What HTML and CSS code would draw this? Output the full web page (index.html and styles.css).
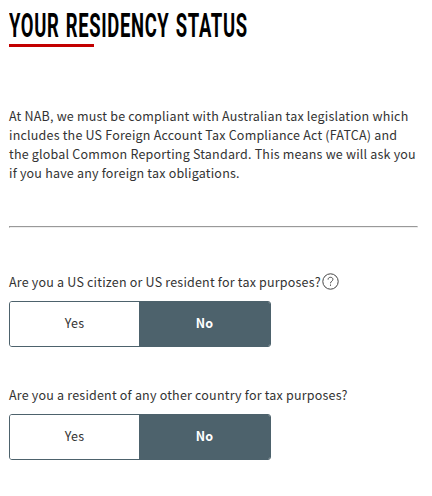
FILE: index.html
```html
<!DOCTYPE html>
<html lang="en">
<head>
    <meta charset="UTF-8">
    <meta name="viewport" content="width=device-width, initial-scale=1.0">
    <title>Your residency status</title>
    <link rel="stylesheet" href="styles.css">
</head>
<body>
    <h1><span class="title">YOUR RESIDENCY STATUS</span></h1>

    <p class="intro">At NAB, we must be compliant with Australian tax legislation which includes the US Foreign Account Tax Compliance Act (FATCA) and the global Common Reporting Standard. This means we will ask you if you have any foreign tax obligations.</p>

    <hr>

    <div class="question">
        <div class="label">
            <span>Are you a US citizen or US resident for tax purposes?</span>
            <svg class="help" width="17" height="17" viewBox="0 0 17 17" fill="none" stroke="#444">
                <circle cx="8.5" cy="8.5" r="7.7"/>
                <path d="M6.1 6.6C6.1 5 7.1 4.3 8.5 4.3s2.4.8 2.4 2.1c0 1.8-2.4 1.8-2.4 3.9M8.5 11.5v1.3"/>
            </svg>
        </div>
        <div class="toggle">
            <button class="option">Yes</button>
            <button class="option selected">No</button>
        </div>
    </div>

    <div class="question">
        <div class="label">
            <span>Are you a resident of any other country for tax purposes?</span>
        </div>
        <div class="toggle">
            <button class="option">Yes</button>
            <button class="option selected">No</button>
        </div>
    </div>
</body>
</html>
```

FILE: styles.css
```css
* {
    margin: 0;
    padding: 0;
    box-sizing: border-box;
}

body {
    background: #fff;
    padding: 5px 14px 0 9px;
    font-family: "Noto Sans CJK SC", sans-serif;
    font-size: 12.5px;
    letter-spacing: 0.2px;
    color: #333;
}

h1 {
    height: 42px;
    font-family: Roboto, sans-serif;
    font-size: 17px;
    font-weight: 700;
    line-height: 41px;
    letter-spacing: 0.6px;
    word-spacing: 1px;
    white-space: nowrap;
    color: #000;
}

/* tall condensed heading */
.title {
    display: inline-block;
    transform: scale(1.085, 2);
    transform-origin: left;
}

h1::after {
    content: "";
    display: block;
    width: 85px;
    height: 3px;
    margin-top: -2px;
    background: #c20000;
}

.intro {
    margin-top: 59px;
    line-height: 19px;
}

hr {
    height: 2px;
    margin: 44px 0 43px;
    border: 1px solid #999;
    border-right-color: #eee;
    border-bottom-color: #eee;
}

.question {
    margin-bottom: 37px;
}

.label {
    display: flex;
    align-items: center;
    height: 21px;
    margin-bottom: 9px;
    white-space: nowrap;
}

.help {
    margin-left: 1px;
}

.toggle {
    display: flex;
    width: 262px;
    height: 46px;
    border: 1px solid #4d626c;
    border-radius: 3px;
    overflow: hidden;
}

.option {
    width: 129px;
    padding-bottom: 4px;
    border: none;
    background: #fff;
    font: inherit;
    letter-spacing: inherit;
    color: #333;
}

.selected {
    flex: 1;
    background: #4d626c;
    font-weight: bold;
    color: #fff;
}
```
